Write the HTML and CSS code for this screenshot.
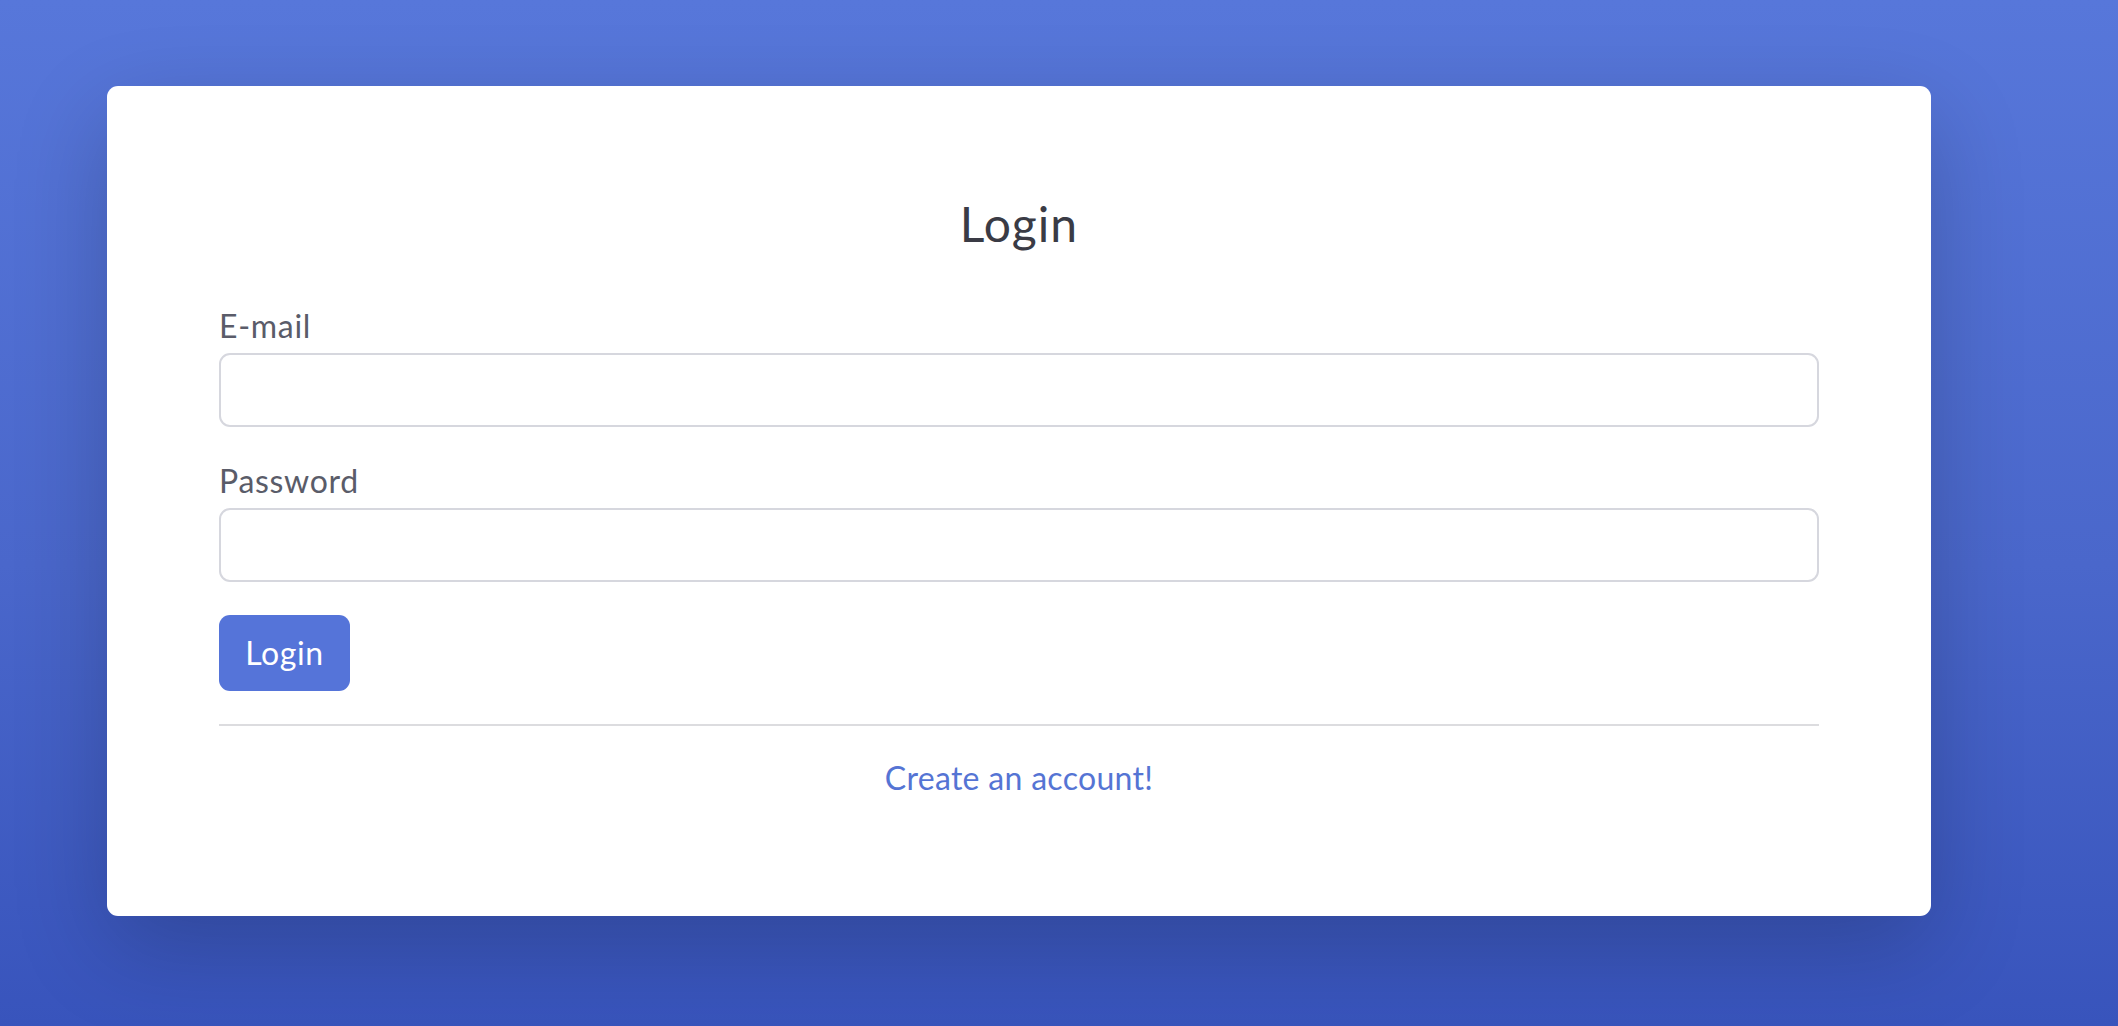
FILE: index.html
```html
<!DOCTYPE html>
<html lang="en">
<head>
<meta charset="utf-8">
<title>Login</title>
<link rel="stylesheet" href="styles.css">
</head>
<body>
<div class="page">
  <div class="card">
    <h1 class="title">Login</h1>
    <form class="form">
      <div class="field">
        <label class="label" for="email">E-mail</label>
        <input class="input" id="email" type="email">
      </div>
      <div class="field field-second">
        <label class="label" for="password">Password</label>
        <input class="input" id="password" type="password">
      </div>
      <button class="btn" type="button">Login</button>
    </form>
    <hr class="divider">
    <div class="footer">
      <a class="link" href="#">Create an account!</a>
    </div>
  </div>
</div>
</body>
</html>
```
FILE: styles.css
```css
* { box-sizing: border-box; }
html, body {
  margin: 0;
  height: 100%;
}
body {
  background: linear-gradient(180deg, #5777da 0%, #4a67cb 55%, #3854bc 100%);
  font-family: Lato, "Open Sans", sans-serif;
  overflow: hidden;
}
.page {
  display: flex;
  align-items: flex-start;
  padding: 86px 0 0 107px;
}
.card {
  width: 1824px;
  background: #fff;
  border-radius: 11px;
  box-shadow: 0 32px 96px rgba(0, 0, 0, 0.2);
  padding: 109px 112px 114px 112px;
  display: flex;
  flex-direction: column;
}
.title {
  margin: 0 0 49px 0;
  font-size: 48px;
  line-height: 1.2;
  font-weight: 400;
  letter-spacing: 1px;
  color: #3a3b45;
  text-align: center;
}
.form {
  display: flex;
  flex-direction: column;
  align-items: flex-start;
}
.field {
  width: 100%;
  display: flex;
  flex-direction: column;
}
.field-second {
  margin-top: 30px;
}
.label {
  font-size: 32px;
  line-height: 48px;
  letter-spacing: 0.7px;
  color: #5a5c69;
  margin-bottom: 3px;
}
.input {
  width: 100%;
  height: 74px;
  border: 2px solid #d6d7de;
  border-radius: 11px;
  background: #fff;
  font-size: 32px;
  font-family: inherit;
  padding: 0 24px;
  outline: none;
}
.btn {
  margin-top: 33px;
  width: 131px;
  height: 76px;
  border: 0;
  border-radius: 11px;
  background: #5574d9;
  color: #fff;
  font-family: inherit;
  font-size: 32px;
  line-height: 48px;
  letter-spacing: 0.6px;
  padding: 0;
  display: flex;
  align-items: center;
  justify-content: center;
}
.divider {
  margin: 33px 0 0 0;
  border: 0;
  border-top: 2px solid #dcdcdf;
  height: 0;
}
.footer {
  margin-top: 28px;
  text-align: center;
}
.link {
  font-size: 32px;
  line-height: 48px;
  letter-spacing: 0.3px;
  color: #5574d4;
  text-decoration: none;
}
```
